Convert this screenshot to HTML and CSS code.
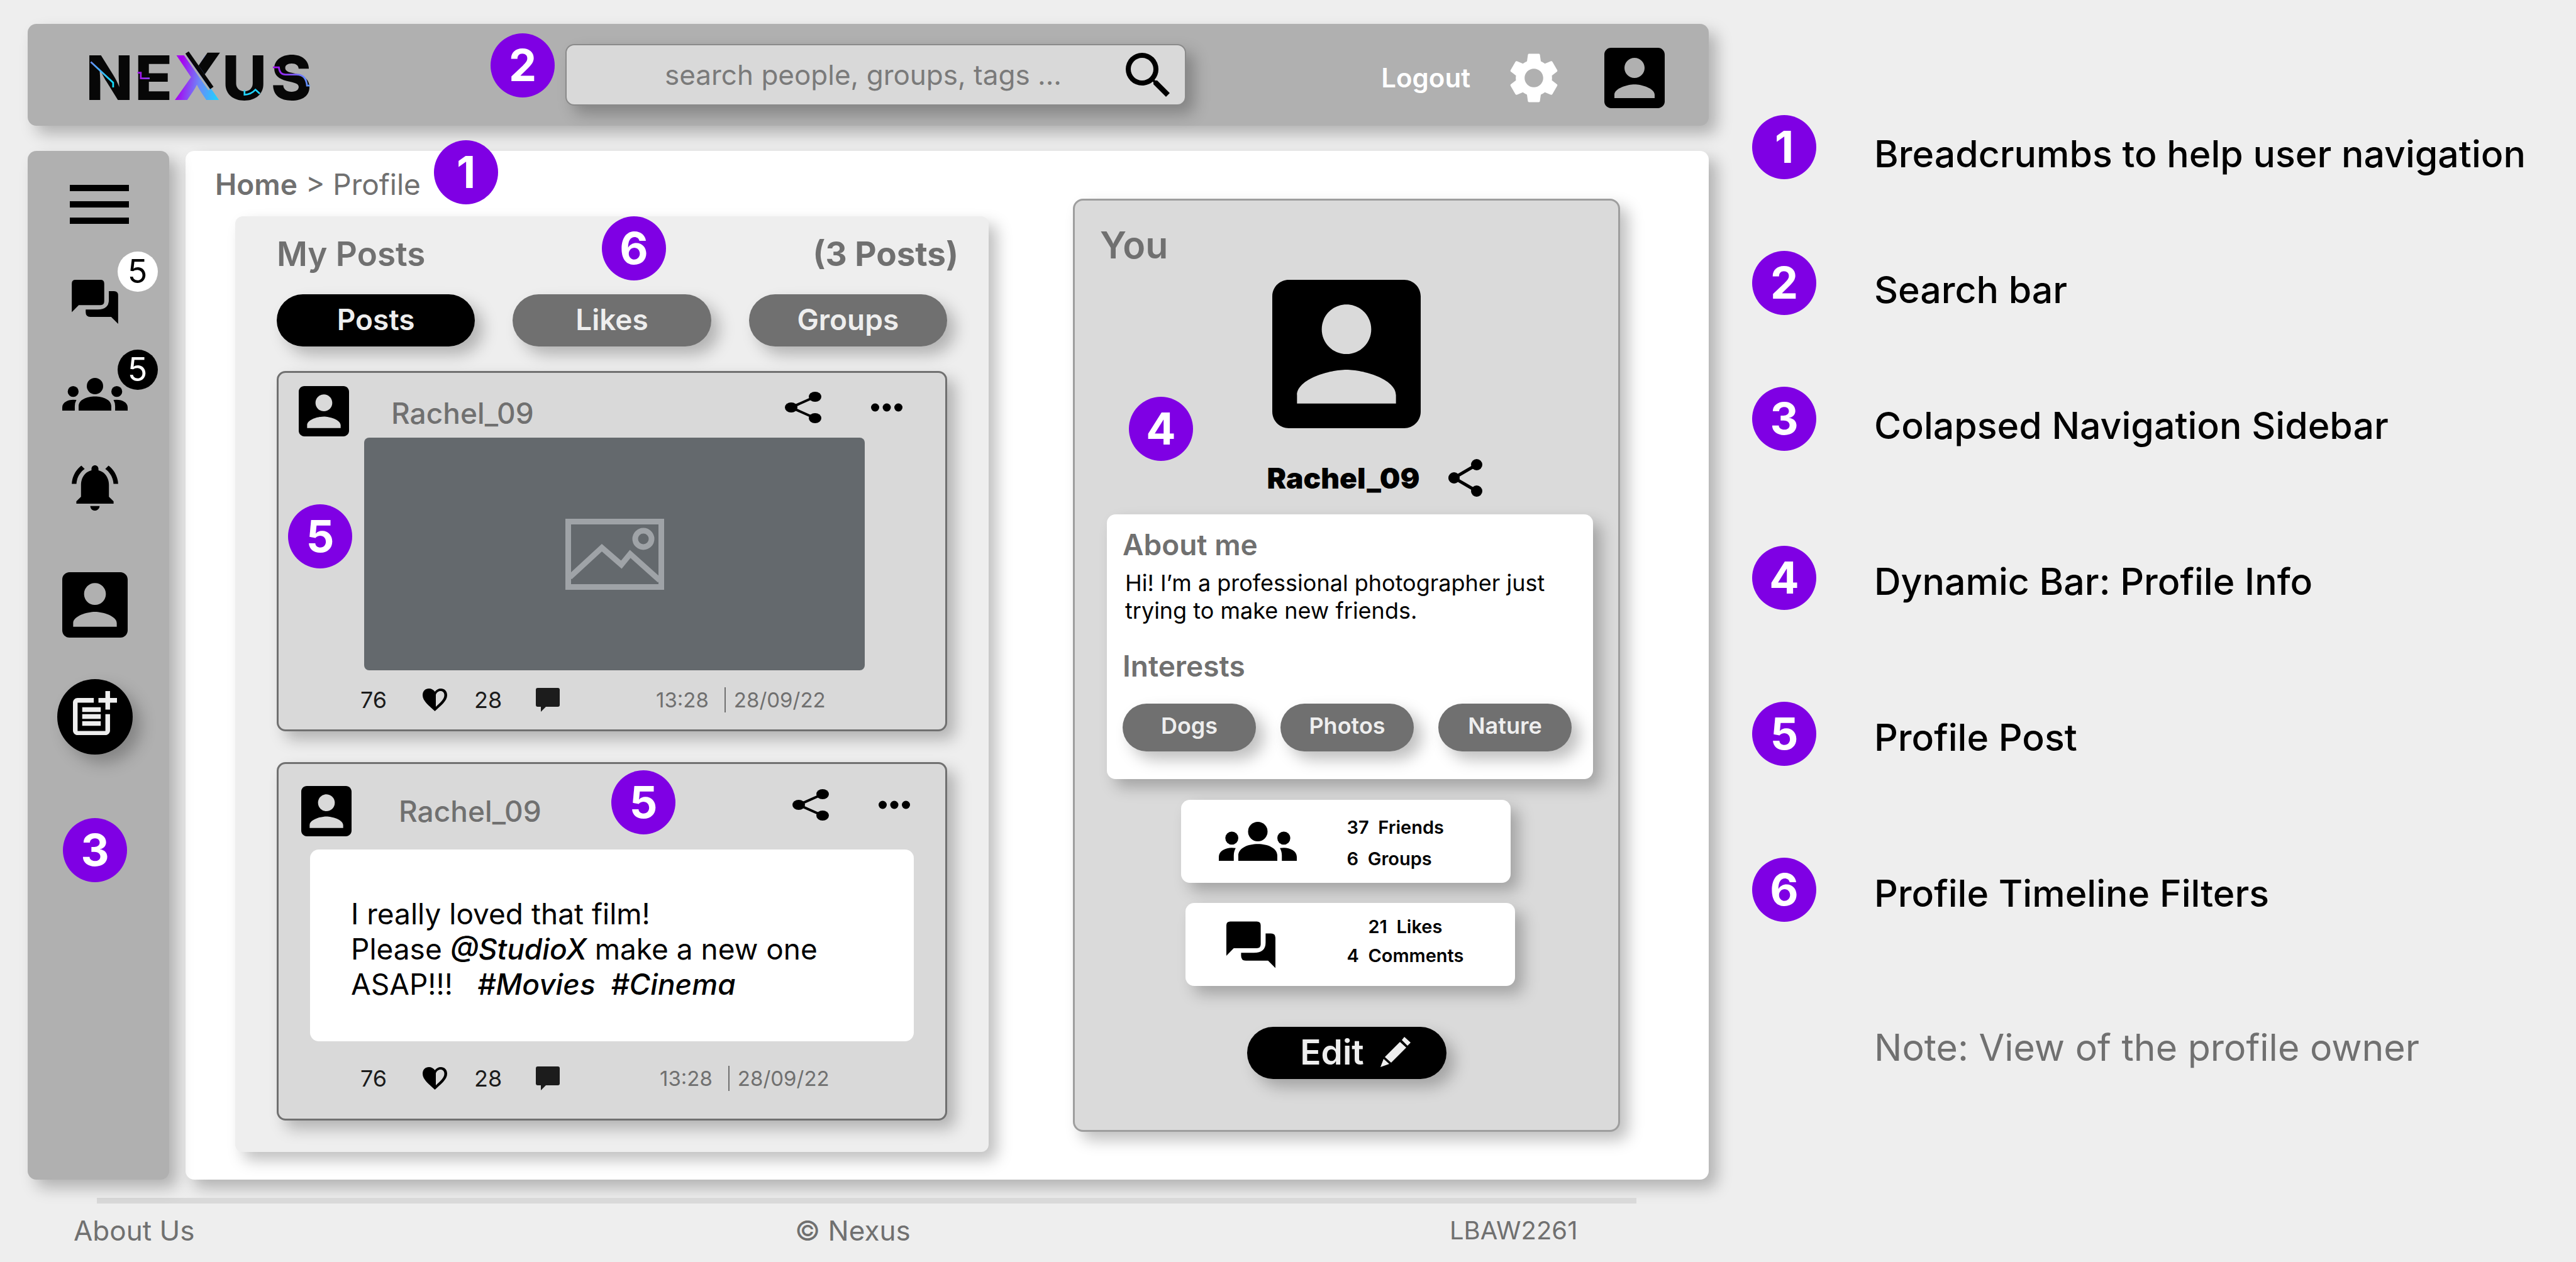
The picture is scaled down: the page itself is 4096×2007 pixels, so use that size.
FILE: index.html
```html
<!DOCTYPE html>
<html lang="en">
<head>
<meta charset="utf-8">
<title>Nexus – Profile</title>
<link rel="stylesheet" href="styles.css">
</head>
<body>
<svg class="sprite" aria-hidden="true">
  <symbol id="i-account" viewBox="3 3 18 18"><path d="M3 5v14c0 1.1.89 2 2 2h14c1.1 0 2-.9 2-2V5c0-1.1-.9-2-2-2H5c-1.11 0-2 .9-2 2zm12 4c0 1.66-1.34 3-3 3s-3-1.34-3-3 1.34-3 3-3 3 1.34 3 3zm-9 8c0-2 4-3.1 6-3.1s6 1.1 6 3.1v1H6v-1z"/></symbol>
  <symbol id="i-chat" viewBox="0 0 20 19"><path d="M0 1.6Q0 0 1.6 0h10.8Q14 0 14 1.6v7.7q0 1.6-1.6 1.6H3L0 14z"/><path d="M16 4.9h2.2q1.8 0 1.8 1.8V19l-3-3H8q-2 0-2-2v-1.2h5.2Q16 12.8 16 8.600z"/></symbol>
  <symbol id="i-people" viewBox="0 0 24 12"><circle cx="12" cy="3" r="3"/><circle cx="4" cy="5" r="2"/><circle cx="20" cy="5" r="2"/><path d="M6 12v-1.600C6 8 9 6.800 12 6.800s6 1.200 6 3.600V12zM0 12v-1.200C0 9 2 8 4 8q.6 0 1.200.1-.6 1-.6 2.300V12zM24 12v-1.200C24 9 22 8 20 8q-.6 0-1.200.1.600 1 .600 2.300V12z"/></symbol>
  <symbol id="i-share" viewBox="0 0 54 60"><path d="M45 9 9 30l36 21" fill="none" stroke="currentColor" stroke-width="5"/><circle cx="9" cy="30" r="9"/><circle cx="45" cy="9" r="9"/><circle cx="45" cy="51" r="9"/></symbol>
  <symbol id="i-share-wide" viewBox="0 0 58 50"><path d="M48 8 10 25l38 17" fill="none" stroke="currentColor" stroke-width="4"/><ellipse cx="10" cy="25" rx="10" ry="8"/><ellipse cx="48" cy="8" rx="10" ry="8"/><ellipse cx="48" cy="42" rx="10" ry="8"/></symbol>
  <symbol id="i-dots" viewBox="0 0 50 14"><circle cx="6.500" cy="7" r="6.500"/><circle cx="25" cy="7" r="6.500"/><circle cx="43.500" cy="7" r="6.500"/></symbol>
  <symbol id="i-heart" viewBox="0 0 39 36"><path d="M19.500 36C10 27 0 20 0 10.500 0 4 4.500 0 10 0c4 0 7.500 2 9.500 5C21.500 2 25 0 29 0c5.500 0 10 4 10 10.500C39 20 29 27 19.500 36zM21 29c7-6.500 13.500-12 13.500-18.500C34.500 6.500 32 4 28.500 4 25 4 22 6.500 21 10z"/></symbol>
  <symbol id="i-comment" viewBox="0 0 38 38"><path d="M3 0h32q3 0 3 3v24q0 3-3 3H16l-8 8v-8H3q-3 0-3-3V3q0-3 3-3z"/></symbol>
</svg>

<div class="page">
  <div class="app">
    <header class="topbar">
      <a class="logo" href="#" aria-label="Nexus">
        <svg viewBox="80 62 1414 306">
          <defs>
            <linearGradient id="g-x" gradientUnits="userSpaceOnUse" x1="640" y1="300" x2="900" y2="340"><stop offset="0" stop-color="#a800f0"/><stop offset=".5" stop-color="#6f86f8"/><stop offset="1" stop-color="#20d0ff"/></linearGradient>
            <linearGradient id="g-n" gradientUnits="userSpaceOnUse" x1="82" y1="0" x2="235" y2="0"><stop offset="0" stop-color="#6b8dfa"/><stop offset="1" stop-color="#0fe0ff"/></linearGradient>
            <linearGradient id="g-e" gradientUnits="userSpaceOnUse" x1="380" y1="0" x2="470" y2="0"><stop offset="0" stop-color="#a800f0"/><stop offset="1" stop-color="#8850e8"/></linearGradient>
            <linearGradient id="g-s" gradientUnits="userSpaceOnUse" x1="1243" y1="0" x2="1490" y2="0"><stop offset="0" stop-color="#a800f0"/><stop offset="1" stop-color="#5f9cff"/></linearGradient>
          </defs>
          <g class="logo-letters">
            <text x="207" y="366">N</text>
            <text x="490" y="366">E</text>
            <text x="767" y="366" fill="url(#g-x)">X</text>
            <text x="1072" y="366">U</text>
            <text x="1371" y="366">S</text>
          </g>
          <path d="M835 65h80L818 204l-40-56z" fill="#070707"/>
          <path d="M681 66 846 303" stroke="#b0b0b0" stroke-width="12"/>
          <path d="M704 64 863 291" stroke="#070707" stroke-width="26"/>
          <g fill="none" stroke-width="11">
            <path d="M88 124 231 257v30" stroke="url(#g-n)"/>
            <path d="M388 193h20v37h57" stroke="url(#g-e)"/>
            <path d="M1072 306v28q40 0 70-32l28 26" stroke="#20d4ff"/>
            <path d="M1254 159h38q4 46 43 46h70q62 0 67 71h19" stroke="url(#g-s)"/>
          </g>
        </svg>
      </a>
      <form class="search">
        <input type="search" aria-label="Search" placeholder="search people, groups, tags ...">
        <button type="submit" aria-label="Search"><svg viewBox="3 3 17.500 17.500"><path d="M15.500 14h-.79l-.28-.27A6.471 6.471 0 0 0 16 9.500 6.500 6.500 0 1 0 9.500 16c1.610 0 3.090-.59 4.230-1.570l.27.28v.79l5 4.990L20.490 19l-4.990-5zm-6 0C7.010 14 5 11.990 5 9.500S7.010 5 9.500 5 14 7.010 14 9.500 11.990 14 9.500 14z"/></svg></button>
        <span class="mark mark-search">2</span>
      </form>
      <nav class="account">
        <a href="#">Logout</a>
        <a href="#" aria-label="Settings"><svg class="gear" viewBox="0 0 24 24"><path d="M19.140 12.940c.04-.3.060-.61.060-.94 0-.32-.02-.64-.07-.94l2.030-1.580c.18-.14.23-.41.12-.61l-1.920-3.320c-.12-.22-.37-.29-.59-.22l-2.390.96c-.5-.38-1.030-.7-1.620-.94l-.36-2.540c-.04-.24-.24-.41-.48-.41h-3.840c-.24 0-.43.17-.47.41l-.36 2.540c-.59.24-1.130.57-1.620.94l-2.390-.96c-.22-.08-.47 0-.59.22L2.740 8.870c-.12.21-.08.47.12.61l2.030 1.580c-.05.3-.09.63-.09.94s.02.64.07.94l-2.030 1.580c-.18.14-.23.41-.12.61l1.920 3.320c.12.22.37.29.59.22l2.390-.96c.5.38 1.030.7 1.620.94l.36 2.540c.05.24.24.41.48.41h3.840c.24 0 .44-.17.47-.41l.36-2.540c.59-.24 1.130-.56 1.620-.94l2.390.96c.22.08.47 0 .59-.22l1.920-3.320c.12-.22.07-.47-.12-.61l-2.010-1.580zM12 15.700c-2.040 0-3.700-1.660-3.700-3.700s1.660-3.700 3.700-3.700 3.700 1.660 3.700 3.700-1.660 3.700-3.700 3.700z"/></svg></a>
        <a class="account-avatar" href="#" aria-label="My account"><svg class="avatar-96"><use href="#i-account"/></svg></a>
      </nav>
    </header>

    <div class="body">
      <nav class="sidebar">
        <button class="menu" type="button" aria-label="Menu"><span></span><span></span><span></span></button>
        <a class="side-link" href="#" aria-label="Messages"><svg class="side-chat"><use href="#i-chat"/></svg><span class="count">5</span></a>
        <a class="side-link" href="#" aria-label="Groups"><svg class="side-people"><use href="#i-people"/></svg><span class="count count-dark">5</span></a>
        <a class="side-link" href="#" aria-label="Notifications"><svg class="side-bell" viewBox="2 2.250 20 20"><path d="M7.580 4.080L6.150 2.650C3.750 4.480 2.170 7.300 2.030 10.500h2c.15-2.650 1.510-4.970 3.550-6.420zm12.390 6.420h2c-.15-3.200-1.730-6.020-4.120-7.850l-1.420 1.430c2.020 1.450 3.390 3.770 3.540 6.420zM18 11c0-3.070-1.640-5.640-4.500-6.320V4c0-.83-.67-1.500-1.500-1.500s-1.500.67-1.500 1.500v.68C7.630 5.360 6 7.920 6 11v5l-2 2v1h16v-1l-2-2v-5zm-6 11c.14 0 .27-.01.4-.04.65-.14 1.180-.58 1.440-1.180.1-.24.15-.5.15-.78h-4c.010 1.100.9 2 2.010 2z"/></svg></a>
        <a class="side-link side-profile" href="#" aria-label="Profile"><svg class="avatar-104"><use href="#i-account"/></svg></a>
        <button class="new-post" type="button" aria-label="New post"><svg viewBox="3 2 19 19"><path d="M17 19.220H5V7h7V5H5c-1.100 0-2 .9-2 2v12c0 1.100.9 2 2 2h12c1.100 0 2-.9 2-2v-7h-2v7.220z"/><path d="M19 2h-2v3h-3v2h3v3h2V7h3V5h-3zM7 9h8v2H7zM7 12h8v2H7zM7 15h8v2H7z"/></svg></button>
        <span class="mark mark-sidebar">3</span>
      </nav>

      <main class="main">
        <div class="timeline">
          <nav class="crumbs" aria-label="Breadcrumb"><a href="#">Home</a> &gt; Profile<span class="mark mark-crumbs">1</span></nav>

          <section class="posts">
            <header class="posts-head">
              <h2>My Posts</h2>
              <strong>(3 Posts)</strong>
              <span class="mark mark-filters">6</span>
            </header>
            <div class="filters">
              <button class="pill pill-active" type="button">Posts</button>
              <button class="pill" type="button">Likes</button>
              <button class="pill" type="button">Groups</button>
            </div>

            <article class="post post-photo">
              <header class="post-head">
                <svg class="avatar-80"><use href="#i-account"/></svg>
                <a class="post-author" href="#">Rachel_09</a>
                <div class="post-actions">
                  <button type="button" aria-label="Share"><svg class="share-wide"><use href="#i-share-wide"/></svg></button>
                  <button type="button" aria-label="More"><svg class="dots"><use href="#i-dots"/></svg></button>
                </div>
              </header>
              <div class="photo">
                <svg viewBox="0 0 157 113" stroke="#9fa3a7" stroke-width="9"><rect x="4.500" y="4.500" width="148" height="104"/><path d="M7 93 58 46l31 27 14-17 47 42"/><circle cx="124" cy="32" r="13"/></svg>
              </div>
              <footer class="post-foot">
                <span>76</span>
                <button type="button" aria-label="Like"><svg class="heart"><use href="#i-heart"/></svg></button>
                <span>28</span>
                <button type="button" aria-label="Comment"><svg class="comment"><use href="#i-comment"/></svg></button>
                <span class="stamp"><time>13:28</time><i class="bar"></i><time>28/09/22</time></span>
              </footer>
              <span class="mark mark-photo">5</span>
            </article>

            <article class="post post-text">
              <header class="post-head">
                <svg class="avatar-80"><use href="#i-account"/></svg>
                <a class="post-author" href="#">Rachel_09</a>
                <div class="post-actions">
                  <button type="button" aria-label="Share"><svg class="share-wide"><use href="#i-share-wide"/></svg></button>
                  <button type="button" aria-label="More"><svg class="dots"><use href="#i-dots"/></svg></button>
                </div>
              </header>
              <p class="message">I really loved that film!
Please <em>@StudioX</em> make a new one
ASAP!!!   <em>#Movies  #Cinema</em></p>
              <footer class="post-foot">
                <span>76</span>
                <button type="button" aria-label="Like"><svg class="heart"><use href="#i-heart"/></svg></button>
                <span>28</span>
                <button type="button" aria-label="Comment"><svg class="comment"><use href="#i-comment"/></svg></button>
                <span class="stamp"><time>13:28</time><i class="bar"></i><time>28/09/22</time></span>
              </footer>
              <span class="mark mark-message">5</span>
            </article>
          </section>
        </div>

        <section class="profile">
          <h2>You</h2>
          <svg class="avatar-236"><use href="#i-account"/></svg>
          <div class="profile-name">
            <strong>Rachel_09</strong>
            <button type="button" aria-label="Share profile"><svg class="share"><use href="#i-share"/></svg></button>
          </div>
          <div class="about">
            <h3>About me</h3>
            <p>Hi! I’m a professional photographer just trying to make new friends.</p>
            <h3>Interests</h3>
            <div class="tags">
              <button class="tag" type="button">Dogs</button>
              <button class="tag" type="button">Photos</button>
              <button class="tag" type="button">Nature</button>
            </div>
          </div>
          <div class="stats">
            <div class="stat stat-people">
              <svg class="stat-people-icon"><use href="#i-people"/></svg>
              <p>37  Friends<br>6  Groups</p>
            </div>
            <div class="stat stat-chat">
              <svg class="stat-chat-icon"><use href="#i-chat"/></svg>
              <p><span class="likes">21  Likes</span><br>4  Comments</p>
            </div>
          </div>
          <button class="edit" type="button">Edit <svg viewBox="0 0 48 48"><path d="M38 0 48 9 43 14 34 5zM31 8 41 17 17 41 7 32zM5 35 14 43 0 48z"/></svg></button>
          <span class="mark mark-profile">4</span>
        </section>
      </main>
    </div>

    <footer class="footer">
      <hr>
      <div class="footer-links">
        <a href="#">About Us</a>
        <span>© Nexus</span>
        <span class="code">LBAW2261</span>
      </div>
    </footer>
  </div>

  <aside class="legend">
    <ol>
      <li><span class="dot">1</span><p>Breadcrumbs to help user navigation</p></li>
      <li><span class="dot">2</span><p>Search bar</p></li>
      <li><span class="dot">3</span><p>Colapsed Navigation Sidebar</p></li>
      <li><span class="dot">4</span><p>Dynamic Bar: Profile Info</p></li>
      <li><span class="dot">5</span><p>Profile Post</p></li>
      <li><span class="dot">6</span><p>Profile Timeline Filters</p></li>
    </ol>
    <p class="note">Note: View of the profile owner</p>
  </aside>
</div>
</body>
</html>
```
FILE: styles.css
```css
* { box-sizing: border-box; }

:root {
  --shadow: 13px 13px 24px rgba(0, 0, 0, .25);
  --grey: #707070;
  --violet: #7f00e4;
}

body {
  margin: 0;
  background: #eee;
  color: #000;
  font-family: Inter, "Liberation Sans", sans-serif;
  font-size: 46px;
  line-height: 56px;
}

h2, h3, p, ol { margin: 0; padding: 0; font-weight: inherit; font-size: inherit; }
a { color: inherit; text-decoration: none; }
button { padding: 0; border: 0; background: none; color: inherit; font: inherit; cursor: pointer; }
svg { display: block; flex: none; fill: currentColor; }
.sprite { position: absolute; width: 0; height: 0; }

.page {
  display: grid;
  grid-template-columns: minmax(0, 2673fr) minmax(0, 1310fr);
  gap: 69px;
  min-height: 100vh;
  padding: 38px 0 20px 44px;
}

/* numbered markers */
.mark, .dot {
  display: flex;
  align-items: center;
  justify-content: center;
  flex: none;
  width: 102px;
  height: 102px;
  border-radius: 50%;
  background: var(--violet);
  color: #fff;
  font-size: 70px;
  font-weight: 700;
  line-height: 102px;
}
.mark { position: absolute; }
.mark-search { left: -121px; top: -19px; }
.mark-sidebar { left: 56px; top: 1061px; }
.mark-crumbs { left: 348px; top: -42px; }
.mark-filters { left: 583px; top: -28px; }
.mark-photo { left: 15px; top: 209px; }
.mark-message { left: 529px; top: 10px; }
.mark-profile { left: 86px; top: 312px; }

/* avatars */
.avatar-80 { width: 80px; height: 80px; }
.avatar-96 { width: 96px; height: 96px; }
.avatar-104 { width: 104px; height: 104px; }
.avatar-236 { width: 236px; height: 236px; }

/* top bar */
.topbar {
  display: flex;
  align-items: center;
  padding: 32px 70px 28px 98px;
  border-radius: 14px;
  background: #b0b0b0;
  box-shadow: var(--shadow);
}
.logo svg { width: 352px; height: 76px; overflow: visible; }
.logo-letters {
  fill: #070707;
  font-size: 395px;
  font-weight: 800;
  text-anchor: middle;
}
.search {
  position: relative;
  display: flex;
  align-items: center;
  flex: 0 1 987px;
  height: 98px;
  margin: 0 0 4px 405px;
  padding-right: 24px;
  border: 2px solid #8a8a8a;
  border-radius: 14px;
  background: #d9d9d9;
  box-shadow: var(--shadow);
}
.search input {
  flex: 1;
  min-width: 0;
  height: 100%;
  padding: 0 0 0 156px;
  border: 0;
  outline: 0;
  background: none;
  color: #000;
  font: inherit;
  font-size: 44px;
}
.search input::placeholder { color: #7a7a7a; opacity: 1; }
.search button svg { width: 70px; height: 70px; }
.account {
  display: flex;
  align-items: center;
  margin-left: auto;
  padding-top: 6px;
  color: #fff;
  font-size: 42px;
  font-weight: 600;
}
.gear { width: 96px; height: 96px; margin: 0 64px 0 53px; }
.account-avatar { color: #000; }

/* layout under the bar */
.body {
  display: grid;
  grid-template-columns: 225px minmax(0, 1fr);
  gap: 26px;
  margin-top: 40px;
}

/* sidebar */
.sidebar {
  position: relative;
  z-index: 1;
  display: flex;
  flex-direction: column;
  align-items: center;
  padding: 54px 12px 0 0;
  border-radius: 14px;
  background: #b0b0b0;
  box-shadow: var(--shadow);
}
.menu { display: grid; gap: 16px; margin: 0 0 3px 14px; }
.menu span { width: 94px; height: 10px; background: #000; }
.side-link {
  position: relative;
  display: flex;
  justify-content: center;
  width: 104px;
  margin-top: 86px;
}
.side-chat { width: 74px; height: 70px; }
.side-people { width: 104px; height: 52px; }
.side-bell { width: 74px; height: 74px; }
.side-profile { margin-top: 97px; }
.count {
  position: absolute;
  top: -45px;
  left: 88px;
  width: 64px;
  height: 64px;
  border-radius: 50%;
  background: #fff;
  font-size: 52px;
  line-height: 64px;
  text-align: center;
}
.count-dark { background: #000; color: #fff; }
.new-post {
  display: flex;
  align-items: center;
  justify-content: center;
  width: 120px;
  height: 120px;
  margin-top: 66px;
  border-radius: 50%;
  background: #000;
  color: #eee;
  box-shadow: var(--shadow);
}
.new-post svg { width: 70px; height: 70px; margin-bottom: 12px; }

/* main */
.main {
  display: grid;
  grid-template-columns: minmax(0, 1230fr) minmax(0, 870fr);
  gap: 134px;
  align-items: start;
  padding: 25px 141px 44px 47px;
  border-radius: 14px;
  background: #fff;
  box-shadow: var(--shadow);
}
.crumbs { position: relative; color: var(--grey); }
.crumbs a { font-weight: 600; }

/* posts */
.posts {
  margin: 23px 0 0 32px;
  padding: 28px 0 50px;
  border-radius: 12px;
  background: #eee;
  box-shadow: var(--shadow);
}
.posts-head {
  position: relative;
  display: flex;
  justify-content: space-between;
  padding: 0 48px 0 66px;
  color: var(--grey);
  font-size: 53px;
  font-weight: 600;
  line-height: 64px;
}
.posts-head strong { font-weight: 700; }
.filters {
  display: grid;
  grid-template-columns: repeat(3, 1fr);
  gap: 60px;
  margin: 32px 66px 0;
}
.pill {
  height: 83px;
  padding-bottom: 4px;
  border-radius: 42px;
  background: var(--grey);
  color: #eee;
  font-weight: 600;
  box-shadow: var(--shadow);
}
.pill-active { background: #000; }

.post {
  position: relative;
  margin: 39px 66px 0;
  border: 3px solid var(--grey);
  border-radius: 14px;
  background: #d9d9d9;
  box-shadow: var(--shadow);
}
.post + .post { margin-top: 49px; }
.post-head { display: flex; align-items: center; padding: 21px 68px 2px 32px; }
.post-author { flex: 1; padding: 6px 0 0 67px; color: var(--grey); font-weight: 500; }
.post-actions { display: flex; align-items: center; gap: 79px; align-self: flex-start; padding-top: 9px; }
.share-wide { width: 58px; height: 50px; }
.dots { width: 50px; height: 14px; }
.photo {
  display: flex;
  align-items: center;
  justify-content: center;
  height: 370px;
  margin: 0 128px 0 136px;
  border-radius: 8px;
  background: #64696d;
}
.photo svg { width: 157px; height: 113px; fill: none; }
.post-foot {
  display: grid;
  grid-template-columns: 99px 82px 98px 191px auto;
  align-items: center;
  padding: 25px 0 25px 130px;
  color: #1c1c1c;
  font-size: 36px;
  line-height: 44px;
}
.heart { width: 39px; height: 36px; color: #000; }
.comment { width: 38px; height: 38px; }
.stamp { display: flex; align-items: center; color: var(--grey); font-size: 33px; }
.bar { width: 2px; height: 40px; margin: 0 13px 0 25px; background: var(--grey); }

.post-text .post-head { padding: 35px 56px 21px 36px; }
.post-text .post-author { padding: 0 0 0 75px; }
.post-text .post-actions { padding-top: 5px; }
.post-text .post-foot { padding: 37px 0 42px 130px; }
.post-text .stamp { padding-left: 6px; }
.message {
  margin: 0 50px;
  padding: 74px 65px 63px;
  border-radius: 14px;
  background: #fff;
  white-space: pre-wrap;
}
.message em { font-weight: 500; }

/* profile */
.profile {
  position: relative;
  display: flex;
  flex-direction: column;
  align-items: center;
  margin-top: 51px;
  padding: 35px 40px 81px;
  border: 3px solid #9e9e9e;
  border-radius: 16px;
  background: #dadada;
  box-shadow: var(--shadow);
}
.profile h2 {
  align-self: stretch;
  margin-bottom: 19px;
  color: var(--grey);
  font-size: 59px;
  font-weight: 600;
  line-height: 72px;
}
.profile-name {
  display: flex;
  align-items: center;
  gap: 46px;
  margin-top: 49px;
  padding-left: 90px;
}
.profile-name strong { font-weight: 900; }
.share { width: 54px; height: 60px; }
.about {
  align-self: stretch;
  margin: 28px 0 0 11px;
  padding: 20px 24px 44px 25px;
  border-radius: 14px;
  background: #fff;
  box-shadow: var(--shadow);
}
.about h3 { color: var(--grey); font-weight: 600; }
.about p {
  margin: 11px 0 38px;
  padding: 0 40px 0 4px;
  font-size: 36px;
  line-height: 44px;
}
.tags { display: flex; gap: 39px; margin-top: 32px; }
.tag {
  flex: 0 1 212px;
  height: 76px;
  padding-bottom: 6px;
  border-radius: 38px;
  background: var(--grey);
  color: #eee;
  font-size: 36px;
  font-weight: 600;
  box-shadow: var(--shadow);
}
.stats { display: flex; flex-direction: column; gap: 32px; width: 531px; margin: 33px 0 0 4px; }
.stat {
  display: flex;
  align-items: center;
  width: 524px;
  height: 132px;
  border-radius: 14px;
  background: #fff;
  font-size: 29px;
  font-weight: 600;
  white-space: pre;
  box-shadow: var(--shadow);
}
.stat-people { padding-left: 60px; line-height: 50px; }
.stat-people p { padding-top: 6px; }
.stat-people-icon { width: 124px; height: 62px; margin-right: 80px; }
.stat-chat { align-self: flex-end; padding-left: 65px; line-height: 46px; }
.stat-chat p { padding-bottom: 10px; }
.stat-chat-icon { width: 78px; height: 75px; margin-right: 114px; }
.likes { padding-left: 34px; }
.edit {
  display: flex;
  align-items: center;
  justify-content: center;
  gap: 26px;
  width: 317px;
  height: 83px;
  margin-top: 65px;
  padding: 0 0 4px 28px;
  border-radius: 42px;
  background: #000;
  color: #eee;
  font-size: 55px;
  font-weight: 600;
  box-shadow: var(--shadow);
}
.edit svg { width: 48px; height: 48px; }

/* footer */
.footer { position: relative; margin-top: 29px; }
.footer hr { height: 9px; margin: 0 115px 0 110px; border: 0; background: #d9d9d9; }
.footer-links {
  display: grid;
  grid-template-columns: 1147fr 1041fr 412fr;
  padding: 17px 0 0 73px;
  color: var(--grey);
  font-size: 44px;
  line-height: 52px;
}
.code { font-size: 40px; }

/* legend */
.legend { padding-top: 145px; font-size: 59px; font-weight: 500; line-height: 72px; }
.legend ol { display: grid; list-style: none; }
.legend li { display: flex; align-items: flex-start; gap: 92px; margin-bottom: 114px; }
.legend li p { padding-top: 26px; }
.legend li:nth-child(3) { margin-bottom: 151px; }
.legend li:nth-child(n+4) { margin-bottom: 146px; }
.legend li:nth-child(n+4) p { padding-top: 21px; }
.note { margin: 18px 0 0 194px; color: var(--grey); font-weight: 400; }
```
